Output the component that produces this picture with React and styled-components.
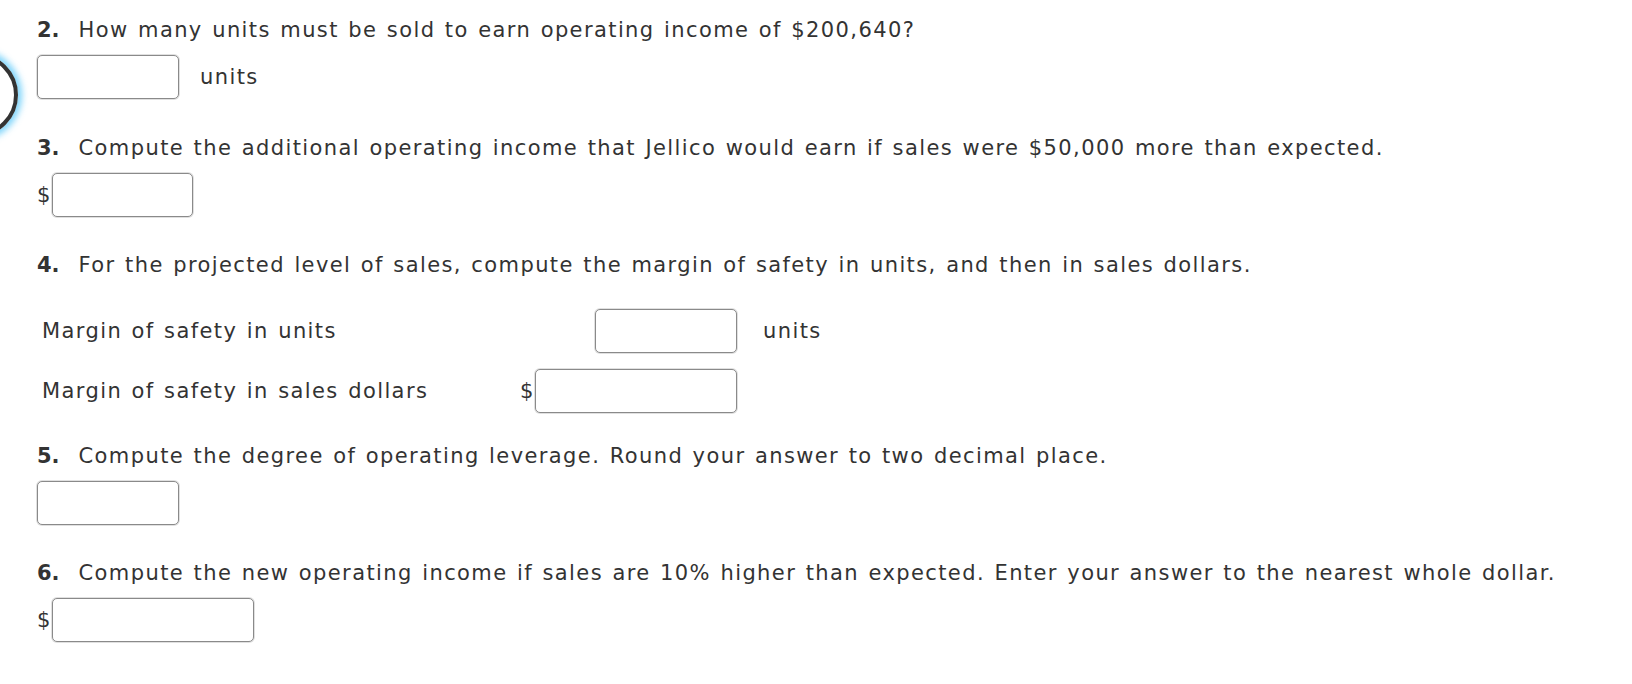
import styled, { createGlobalStyle } from "styled-components";

// Global page reset
const GlobalStyle = createGlobalStyle`
  body {
    margin: 0;
    background: #ffffff;
    font-family: "DejaVu Sans", Verdana, sans-serif;
    color: #333333;
  }
`;

export default function App() {
  return (
    <>
      <GlobalStyle />
      <Page>
        <FocusRing />
        <Container>
          {/* Question 2 */}
          <Section $gap={34}>
            <Question>
              <Num>2.</Num>&nbsp; How many units must be sold to earn operating income of $200,640?
            </Question>
            <AnswerRow>
              <Field $width={142} />
              <Unit>units</Unit>
            </AnswerRow>
          </Section>

          {/* Question 3 */}
          <Section $gap={33}>
            <Question>
              <Num>3.</Num>&nbsp; Compute the additional operating income that Jellico would earn if sales were $50,000 more than expected.
            </Question>
            <AnswerRow>
              <Dollar>$</Dollar>
              <Field $width={141} />
            </AnswerRow>
          </Section>

          {/* Question 4 */}
          <Section $gap={28}>
            <Question>
              <Num>4.</Num>&nbsp; For the projected level of sales, compute the margin of safety in units, and then in sales dollars.
            </Question>
            <SafetyTable>
              <SafetyLabel>Margin of safety in units</SafetyLabel>
              <SafetyCell>
                <Field $width={142} />
              </SafetyCell>
              <SafetyUnit>units</SafetyUnit>
              <SafetyLabel>Margin of safety in sales dollars</SafetyLabel>
              <SafetyCell>
                <Dollar>$</Dollar>
                <Field $width={202} />
              </SafetyCell>
              <SafetyUnit />
            </SafetyTable>
          </Section>

          {/* Question 5 */}
          <Section $gap={33}>
            <Question>
              <Num>5.</Num>&nbsp; Compute the degree of operating leverage. Round your answer to two decimal place.
            </Question>
            <AnswerRow>
              <Field $width={142} />
            </AnswerRow>
          </Section>

          {/* Question 6 */}
          <Section $gap={0}>
            <Question>
              <Num>6.</Num>&nbsp; Compute the new operating income if sales are 10% higher than expected. Enter your answer to the nearest whole dollar.
            </Question>
            <AnswerRow>
              <Dollar>$</Dollar>
              <Field $width={202} />
            </AnswerRow>
          </Section>
        </Container>
      </Page>
    </>
  );
}

// Styled components

const Page = styled.div`
  position: relative;
  width: 1632px;
  height: 684px;
  overflow: hidden;
  letter-spacing: 1.4px;
  word-spacing: 1.4px;
`;

const FocusRing = styled.div`
  position: absolute;
  left: -66px;
  top: 53px;
  width: 76px;
  height: 76px;
  border: 4px solid #333333;
  border-radius: 50%;
  box-shadow: 0 0 6px 4px rgba(90, 200, 250, 0.75);
`;

const Container = styled.div`
  display: flex;
  flex-direction: column;
  padding: 15px 0 0 37px;
`;

const Section = styled.div`
  display: flex;
  flex-direction: column;
  margin-bottom: ${(p) => p.$gap}px;
`;

const Question = styled.div`
  font-size: 21px;
  line-height: 30px;
  height: 30px;
  margin-bottom: 10px;
  white-space: nowrap;
`;

const Num = styled.b`
  font-weight: bold;
  letter-spacing: 0;
`;

const AnswerRow = styled.div`
  display: flex;
  align-items: center;
  height: 44px;
`;

const Field = styled.input`
  box-sizing: border-box;
  width: ${(p) => p.$width}px;
  height: 44px;
  border: 1px solid #8a8a8a;
  border-radius: 5px;
  box-shadow: 0 0 0 1px rgba(0, 0, 0, 0.12);
  background: #ffffff;
  outline: none;
  margin: 0;
  padding: 0 6px;
  font-family: inherit;
  font-size: 21px;
`;

const Unit = styled.span`
  font-size: 21px;
  margin-left: 21px;
`;

const Dollar = styled.span`
  font-size: 21px;
  width: 15px;
`;

const SafetyTable = styled.div`
  display: grid;
  grid-template-columns: 478px 217px auto;
  grid-auto-rows: 44px;
  row-gap: 16px;
  align-items: center;
  margin-top: 19px;
  padding-left: 5px;
`;

const SafetyLabel = styled.span`
  font-size: 21px;
`;

const SafetyCell = styled.div`
  display: flex;
  align-items: center;
  justify-content: flex-end;
`;

const SafetyUnit = styled.span`
  font-size: 21px;
  margin-left: 26px;
`;
